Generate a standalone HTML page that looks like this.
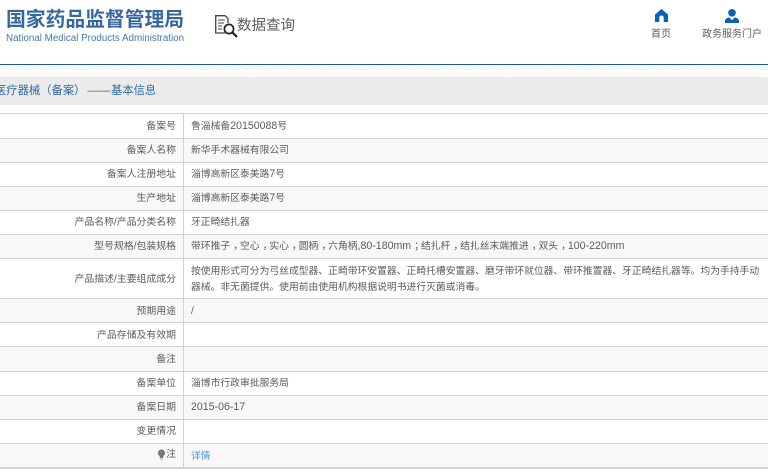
<!DOCTYPE html>
<html>
<head>
<meta charset="utf-8">
<style>
html,body{margin:0;padding:0;background:#fff}
body{position:relative;width:768px;height:472px;overflow:hidden;font-family:"Liberation Sans","Noto Sans CJK SC",sans-serif;color:#666}
.a{position:absolute;white-space:nowrap}
.row{position:absolute;left:0;width:768px;box-sizing:border-box;border-top:1px solid #d2d2d2}
.alt{background:#f8f8f8}
.l{position:absolute;right:592px;font-size:9.9px;line-height:12px;color:#5c5c5c;white-space:nowrap}
.v{position:absolute;left:191px;font-size:9.8px;line-height:12px;color:#5c5c5c;white-space:nowrap}
.n{font-size:10.6px;line-height:0}
.p{font-family:"Noto Sans CJK TC",sans-serif;line-height:0}
.c{position:relative;left:3px}
</style>
</head>
<body>
<div class="a" style="left:6px;top:8px;font-size:19.8px;line-height:24px;font-weight:700;color:#35689f">国家药品监督管理局</div>
<div class="a" style="left:6px;top:33px;font-size:9.8px;line-height:12px;color:#4a76a8">National Medical Products Administration</div>

<svg class="a" style="left:214px;top:14px" width="25" height="24" viewBox="0 0 25 24">
<path d="M11 19H1.700V1.700H11l3 3V9" fill="none" stroke="#444" stroke-width="1.300"/>
<path d="M4 6h7M4 9h6M4 12h4M4 15h4" stroke="#444" stroke-width="1"/>
<circle cx="15" cy="15" r="4.600" fill="none" stroke="#222" stroke-width="1.700"/>
<path d="M18.500 18.500l4.500 4.500" stroke="#222" stroke-width="2.200"/>
</svg>
<div class="a" style="left:237px;top:16px;font-size:14.500px;line-height:20px;color:#5c5c5c">数据查询</div>

<svg class="a" style="left:655px;top:9px" width="13" height="13" viewBox="0 0 13 13">
<path d="M6.500 0L0 5.500V13H4.300V8.700a2.200 2.200 0 0 1 4.400 0V13H13V5.500z" fill="#0f5fb5"/>
</svg>
<div class="a" style="left:651px;top:29px;font-size:10px;line-height:12px;color:#5c5c5c">首页</div>

<svg class="a" style="left:725px;top:9px" width="14" height="14" viewBox="0 0 14 14">
<circle cx="7" cy="3.800" r="3.800" fill="#0f5fb5"/>
<path d="M0 14V11.500Q.5 9.300 4 8.200L7 11L10 8.200Q13.500 9.300 14 11.500V14z" fill="#0f5fb5"/>
</svg>
<div class="a" style="left:702px;top:29px;font-size:10px;line-height:12px;color:#5c5c5c">政务服务门户</div>

<div class="a" style="left:0;top:64px;width:768px;height:1px;background:#1f5a92"></div>
<div class="a" style="left:0;top:65px;width:768px;height:5px;background:repeating-linear-gradient(135deg,#e6f1f8 0,#e6f1f8 1px,#fff 1px,#fff 3px)"></div>
<div class="a" style="left:0;top:70px;width:768px;height:7px;background:linear-gradient(#fff,#fbfbfb)"></div>
<div class="a" style="left:0;top:77px;width:768px;height:28px;background:#ebebeb"></div>
<div class="a" style="left:-5px;top:84px;font-size:11.300px;line-height:15px;color:#2f6aa5">医疗器械<span class="p">（</span>备案<span class="p">）</span><span style="margin:0 1px 0 2px">——</span>基本信息</div>

<div class="row" style="top:113px;height:25px"><span class="l" style="top:7px">备案号</span><span class="v" style="top:7px">鲁淄械备<span class="n">20150088</span>号</span></div>
<div class="row alt" style="top:138px;height:24px"><span class="l" style="top:6px">备案人名称</span><span class="v" style="top:6px">新华手术器械有限公司</span></div>
<div class="row" style="top:162px;height:24px"><span class="l" style="top:6px">备案人注册地址</span><span class="v" style="top:6px">淄博高新区泰美路<span class="n">7</span>号</span></div>
<div class="row alt" style="top:186px;height:24px"><span class="l" style="top:6px">生产地址</span><span class="v" style="top:6px">淄博高新区泰美路<span class="n">7</span>号</span></div>
<div class="row" style="top:210px;height:24px"><span class="l" style="top:6px">产品名称/产品分类名称</span><span class="v" style="top:6px">牙正畸结扎器</span></div>
<div class="row alt" style="top:234px;height:24px"><span class="l" style="top:6px">型号规格/包装规格</span><span class="v" style="top:6px">带环推子<span class="c">，</span>空心<span class="c">，</span>实心<span class="c">，</span>圆柄<span class="c">，</span>六角柄<span class="n">,80-180mm</span><span class="c">；</span>结扎杆<span class="c">，</span>结扎丝末端推进<span class="c">，</span>双头<span class="c">，</span><span class="n">100-220mm</span></span></div>
<div class="row" style="top:258px;height:40px"><span class="l" style="top:15px">产品描述/主要组成成分</span><span class="v" style="top:5px;line-height:16px">按使用形式可分为弓丝成型器、正畸带环安置器、正畸托槽安置器、磨牙带环就位器、带环推置器、牙正畸结扎器等。均为手持手动<br>器械。非无菌提供。使用前由使用机构根据说明书进行灭菌或消毒。</span></div>
<div class="row alt" style="top:298px;height:24px"><span class="l" style="top:7px">预期用途</span><span class="v" style="top:7px">/</span></div>
<div class="row" style="top:322px;height:24px"><span class="l" style="top:7px">产品存储及有效期</span></div>
<div class="row alt" style="top:346px;height:25px"><span class="l" style="top:7px">备注</span></div>
<div class="row" style="top:371px;height:24px"><span class="l" style="top:6px">备案单位</span><span class="v" style="top:6px">淄博市行政审批服务局</span></div>
<div class="row alt" style="top:395px;height:24px"><span class="l" style="top:6px">备案日期</span><span class="v" style="top:6px"><span class="n">2015-06-17</span></span></div>
<div class="row" style="top:419px;height:24px"><span class="l" style="top:6px">变更情况</span></div>
<div class="row alt" style="top:443px;height:24px"><span class="l" style="top:5px">注</span><span class="v" style="top:7px;color:#4a90e2">详情</span></div>
<svg class="a" style="left:157px;top:449px" width="9" height="11" viewBox="0 0 9 11">
<path d="M4.500 0.500a3.500 3.500 0 0 1 2 6.400L6 9H3L2.500 6.900a3.500 3.500 0 0 1 2-6.400z" fill="#777"/>
<path d="M3.200 10h2.600" stroke="#999" stroke-width="1"/>
</svg>

<div class="a" style="left:183px;top:113px;width:1px;height:354px;background:#d2d2d2"></div>
<div class="a" style="left:0;top:467px;width:768px;height:2px;background:#d2d2d2"></div>
</body>
</html>
